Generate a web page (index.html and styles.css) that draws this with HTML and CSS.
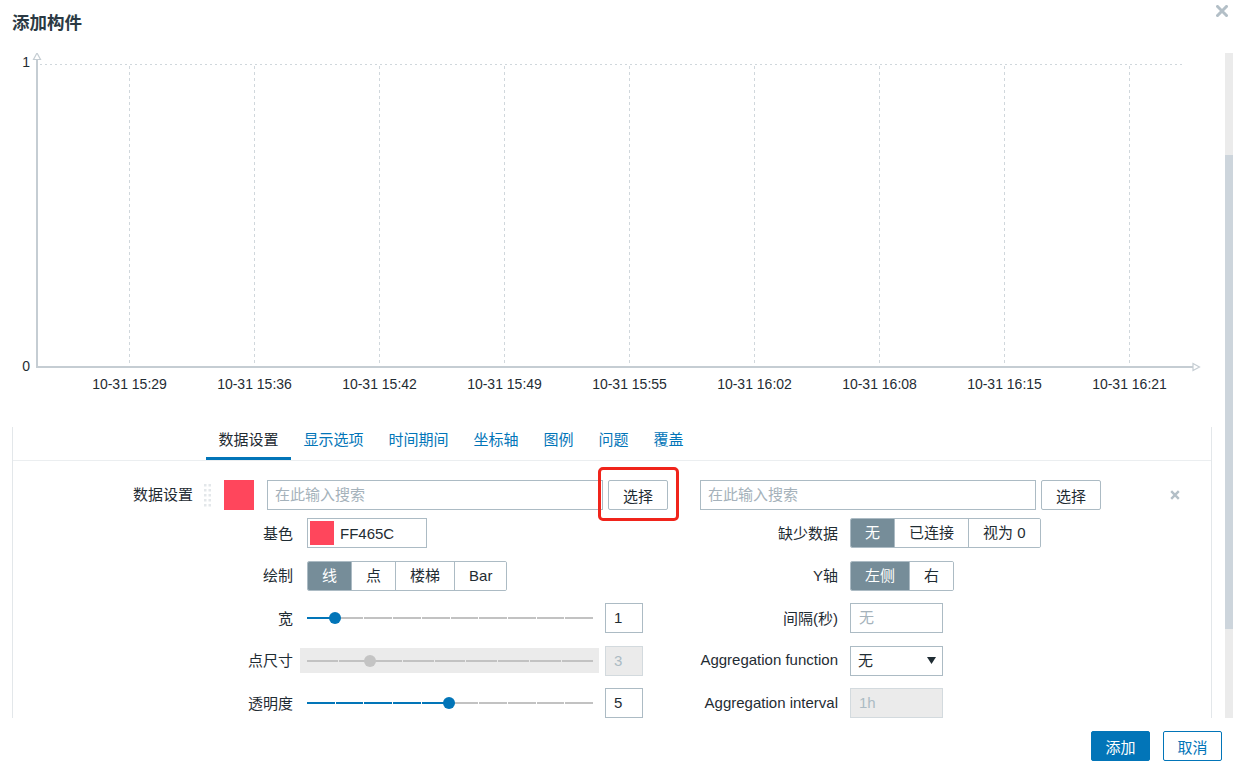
FILE: index.html
```html
<!DOCTYPE html>
<html lang="zh-CN">
<head>
<meta charset="utf-8">
<title>添加构件</title>
<link rel="stylesheet" href="styles.css">
</head>
<body>
<div class="dialog">
  <header class="dlg-head">
    <h1 class="dlg-title">添加构件</h1>
    <button class="dlg-close" type="button" aria-label="关闭">
      <svg width="12" height="12" viewBox="0 0 12 12"><path d="M1.5 1.5L10.5 10.5M10.5 1.5L1.5 10.5" stroke="#b3bfc7" stroke-width="3" stroke-linecap="square"/></svg>
    </button>
  </header>

  <div class="dlg-body">
    <div class="dlg-scroll">
      <svg class="chart" width="1225" height="374" viewBox="0 53 1225 374">
        <g class="grid">
          <line x1="40" y1="64.5" x2="1185" y2="64.5" stroke-dasharray="2 3"/>
          <line x1="129.5" y1="66" x2="129.5" y2="366"/>
          <line x1="254.5" y1="66" x2="254.5" y2="366"/>
          <line x1="379.5" y1="66" x2="379.5" y2="366"/>
          <line x1="504.5" y1="66" x2="504.5" y2="366"/>
          <line x1="629.5" y1="66" x2="629.5" y2="366"/>
          <line x1="754.5" y1="66" x2="754.5" y2="366"/>
          <line x1="879.5" y1="66" x2="879.5" y2="366"/>
          <line x1="1004.5" y1="66" x2="1004.5" y2="366"/>
          <line x1="1129.5" y1="66" x2="1129.5" y2="366"/>
        </g>
        <g class="axis">
          <line x1="37" y1="59" x2="37" y2="368" stroke-width="2"/>
          <polygon points="37,53 33.5,59.5 40.5,59.5" fill="#fff" stroke-width="1.2"/>
          <line x1="36" y1="367" x2="1193" y2="367" stroke-width="2"/>
          <polygon points="1199.5,367 1193,363.5 1193,370.5" fill="#fff" stroke-width="1.2"/>
        </g>
        <g class="ylabels">
          <text x="30" y="67">1</text>
          <text x="30" y="371">0</text>
        </g>
        <g class="xlabels">
          <text x="129.5" y="389">10-31 15:29</text>
          <text x="254.5" y="389">10-31 15:36</text>
          <text x="379.5" y="389">10-31 15:42</text>
          <text x="504.5" y="389">10-31 15:49</text>
          <text x="629.5" y="389">10-31 15:55</text>
          <text x="754.5" y="389">10-31 16:02</text>
          <text x="879.5" y="389">10-31 16:08</text>
          <text x="1004.5" y="389">10-31 16:15</text>
          <text x="1129.5" y="389">10-31 16:21</text>
        </g>
      </svg>

      <div class="tabs-panel">
        <nav class="tabs">
          <a class="tab active">数据设置</a>
          <a class="tab">显示选项</a>
          <a class="tab">时间期间</a>
          <a class="tab">坐标轴</a>
          <a class="tab">图例</a>
          <a class="tab">问题</a>
          <a class="tab">覆盖</a>
        </nav>

        <div class="form">
          <div class="form-label">数据设置</div>
          <div class="ds">
            <div class="ds-head">
              <svg class="drag" width="7" height="23" viewBox="0 0 7 23">
                <rect x="0" y="0" width="2.5" height="2.5"/><rect x="4.5" y="0" width="2.5" height="2.5"/>
                <rect x="0" y="5" width="2.5" height="2.5"/><rect x="4.5" y="5" width="2.5" height="2.5"/>
                <rect x="0" y="10" width="2.5" height="2.5"/><rect x="4.5" y="10" width="2.5" height="2.5"/>
                <rect x="0" y="15" width="2.5" height="2.5"/><rect x="4.5" y="15" width="2.5" height="2.5"/>
                <rect x="0" y="20" width="2.5" height="2.5"/><rect x="4.5" y="20" width="2.5" height="2.5"/>
              </svg>
              <div class="swatch"></div>
              <div class="input search"><span class="ph">在此输入搜索</span></div>
              <div class="annot"><button class="btn" type="button">选择</button></div>
              <div class="input search second"><span class="ph">在此输入搜索</span></div>
              <button class="btn" type="button">选择</button>
              <button class="ds-remove" type="button" aria-label="删除">
                <svg width="10" height="10" viewBox="0 0 10 10"><path d="M1.2 1.2L8.8 8.8M8.8 1.2L1.2 8.8" stroke="#b3bfc7" stroke-width="2.4"/></svg>
              </button>
            </div>

            <div class="ds-grid">
              <div class="fl">基色</div>
              <div class="ff ff-l">
                <div class="color-input"><span class="color-chip"></span><span>FF465C</span></div>
              </div>
              <div class="fl fl-r">缺少数据</div>
              <div class="ff">
                <div class="seg"><span class="on">无</span><span>已连接</span><span>视为 0</span></div>
              </div>

              <div class="fl">绘制</div>
              <div class="ff ff-l">
                <div class="seg"><span class="on">线</span><span>点</span><span>楼梯</span><span>Bar</span></div>
              </div>
              <div class="fl fl-r">Y轴</div>
              <div class="ff">
                <div class="seg"><span class="on">左侧</span><span>右</span></div>
              </div>

              <div class="fl">宽</div>
              <div class="ff">
                <div class="slider">
                  <div class="track">
                    <i class="on"></i><i></i><i></i><i></i><i></i><i></i><i></i><i></i><i></i><i></i>
                    <span class="thumb" style="left: 10%"></span>
                  </div>
                </div>
                <div class="input num">1</div>
              </div>
              <div class="fl fl-r">间隔(秒)</div>
              <div class="ff">
                <div class="input short"><span class="ph">无</span></div>
              </div>

              <div class="fl">点尺寸</div>
              <div class="ff">
                <div class="slider disabled">
                  <div class="track">
                    <i></i><i></i><i></i><i></i><i></i><i></i><i></i><i></i><i></i>
                    <span class="thumb" style="left: 22.222%"></span>
                  </div>
                </div>
                <div class="input num disabled">3</div>
              </div>
              <div class="fl fl-r">Aggregation function</div>
              <div class="ff">
                <div class="input short select"><span>无</span>
                  <svg width="9" height="7" viewBox="0 0 9 7"><path d="M0 0H9L4.5 7Z" fill="#1f2c33"/></svg>
                </div>
              </div>

              <div class="fl">透明度</div>
              <div class="ff">
                <div class="slider">
                  <div class="track">
                    <i class="on"></i><i class="on"></i><i class="on"></i><i class="on"></i><i class="on"></i><i></i><i></i><i></i><i></i><i></i>
                    <span class="thumb" style="left: 50%"></span>
                  </div>
                </div>
                <div class="input num">5</div>
              </div>
              <div class="fl fl-r">Aggregation interval</div>
              <div class="ff">
                <div class="input short disabled">1h</div>
              </div>

              <div class="fl">&nbsp;</div>
              <div class="ff"></div>
              <div class="fl fl-r">&nbsp;</div>
              <div class="ff"></div>
            </div>
          </div>
        </div>
      </div>
    </div>
    <div class="scrollbar"><div class="scroll-thumb"></div></div>
  </div>

  <footer class="dlg-foot">
    <button class="btn-primary" type="button">添加</button>
    <button class="btn-outline" type="button">取消</button>
  </footer>
</div>
</body>
</html>
```

FILE: styles.css
```css
* { box-sizing: border-box; }

html, body {
  margin: 0;
  padding: 0;
}

body {
  width: 1233px;
  height: 770px;
  overflow: hidden;
  background: #fff;
  color: #1f2c33;
  font-family: "Liberation Sans", "Noto Sans CJK SC", Arial, sans-serif;
  font-size: 15px;
}

button {
  font: inherit;
  cursor: pointer;
}

.dialog {
  display: flex;
  flex-direction: column;
  height: 770px;
}

/* header */
.dlg-head {
  flex: none;
  height: 53px;
  display: flex;
  justify-content: space-between;
  align-items: flex-start;
  padding: 0 5px 0 12px;
}

.dlg-title {
  margin: 12px 0 0;
  font-size: 17.5px;
  line-height: 22px;
  font-weight: bold;
  color: #2b3a44;
}

.dlg-close {
  display: block;
  margin-top: 5px;
  width: 12px;
  height: 12px;
  padding: 0;
  border: 0;
  background: none;
}

.dlg-close svg { display: block; }

/* body */
.dlg-body {
  flex: none;
  height: 665px;
  display: flex;
}

.dlg-scroll {
  flex: 1;
  overflow: hidden;
}

.scrollbar {
  flex: none;
  width: 8px;
  background: #ebebeb;
  padding-top: 102px;
}

.scroll-thumb {
  height: 474px;
  background: #cdd5dc;
}

/* chart */
.chart { display: block; }

.chart .grid line {
  stroke: #d0d7dc;
  stroke-width: 1;
  stroke-dasharray: 3 3;
}

.chart .grid line:first-child { stroke-dasharray: 2 3; }

.chart .axis line,
.chart .axis polygon {
  stroke: #c5cdd3;
}

.chart text {
  font-family: "Liberation Sans", Arial, sans-serif;
  font-size: 14px;
  fill: #1f2c33;
}

.chart .ylabels text { text-anchor: end; }
.chart .xlabels text { text-anchor: middle; }

/* tabs panel */
.tabs-panel {
  margin: 0 13px 0 12px;
  border-left: 1px solid #e3e7ea;
  border-right: 1px solid #e3e7ea;
  padding-bottom: 60px;
}

.tabs {
  display: flex;
  padding-left: 193px;
  border-bottom: 1px solid #ebeef0;
}

.tab {
  padding: 4px 12.5px 8px;
  line-height: 18px;
  color: #0275b8;
  border-bottom: 3px solid transparent;
  text-decoration: none;
}

.tab.active {
  color: #1f2c33;
  border-bottom-color: #0275b8;
}

/* form */
.form {
  display: grid;
  grid-template-columns: 180px 1fr;
  column-gap: 11px;
  padding-top: 19px;
}

.form-label {
  text-align: right;
  line-height: 30px;
}

.ds-head {
  display: flex;
  align-items: center;
  height: 30px;
}

.drag {
  display: block;
  fill: #e3e7ea;
}

.swatch {
  width: 30px;
  height: 30px;
  margin-left: 13px;
  background: #ff465c;
}

.input {
  height: 30px;
  border: 1px solid #acbbc4;
  background: #fff;
  padding: 0 7px;
  line-height: 28px;
  white-space: nowrap;
  overflow: hidden;
}

.ph { color: #a5b2bb; }

.search {
  width: 336px;
  margin-left: 13px;
}

.search.second { margin-left: 32px; }

.btn {
  height: 30px;
  width: 60px;
  margin-left: 5px;
  padding: 0;
  border: 1px solid #acbbc4;
  border-radius: 2px;
  background: #fff;
  color: #1f2c33;
}

.annot {
  position: relative;
  display: flex;
}

.annot::after {
  content: "";
  position: absolute;
  top: -13px;
  bottom: -11px;
  left: -5px;
  right: -11px;
  border: 3px solid #f0241b;
  border-radius: 5px;
  pointer-events: none;
}

.ds-remove {
  display: block;
  margin-left: 69px;
  width: 10px;
  height: 10px;
  padding: 0;
  border: 0;
  background: none;
}

.ds-remove svg { display: block; }

/* data set sub form */
.ds-grid {
  margin: 8px 0 0 20px;
  display: grid;
  grid-template-columns: 76px 400px 150px 1fr;
  grid-auto-rows: 30px;
  row-gap: 12.5px;
  align-items: center;
}

.fl {
  text-align: right;
  padding-right: 7px;
  padding-bottom: 2px;
  white-space: nowrap;
}

.fl-r { padding-right: 12px; }

.ff {
  display: flex;
  align-items: center;
  height: 30px;
}

.ff-l { padding-left: 7px; }

.color-input {
  display: flex;
  align-items: center;
  width: 120px;
  height: 30px;
  border: 1px solid #acbbc4;
  padding: 2px;
}

.color-chip {
  width: 24px;
  height: 24px;
  background: #ff465c;
  margin-right: 6px;
}

.seg {
  display: flex;
  height: 30px;
  border: 1px solid #acbbc4;
  border-radius: 2px;
  overflow: hidden;
}

.seg span {
  padding: 0 14px;
  line-height: 28px;
  border-left: 1px solid #acbbc4;
  background: #fff;
  white-space: nowrap;
}

.seg span:first-child { border-left: 0; }

.seg span.on {
  background: #768d99;
  color: #fff;
}

/* slider */
.slider {
  width: 299px;
  height: 25px;
  padding: 0 6px 0 7px;
  display: flex;
  align-items: center;
}

.slider.disabled { background: #ebebeb; }

.track {
  position: relative;
  flex: 1;
  display: flex;
  gap: 1px;
  height: 2px;
}

.track i {
  flex: 1;
  background: #c2c2c2;
}

.track i.on { background: #0275b8; }

.thumb {
  position: absolute;
  top: 50%;
  width: 12px;
  height: 12px;
  margin: -6px 0 0 -7px;
  border-radius: 50%;
  background: #0275b8;
}

.slider.disabled .thumb { background: #c4c4c4; }

.num {
  width: 38px;
  margin-left: 6px;
  padding-left: 8px;
}

.input.disabled {
  background: #ebebeb;
  border-color: #d3dade;
  color: #acbbc4;
}

.short {
  width: 93px;
  padding-left: 8px;
}

.select {
  display: flex;
  align-items: center;
  justify-content: space-between;
  padding: 0 6px 0 7px;
}

.select svg { display: block; }

/* footer */
.dlg-foot {
  flex: none;
  height: 52px;
  display: flex;
  justify-content: flex-end;
  align-items: flex-start;
  gap: 13px;
  padding: 13px 11px 0 0;
}

.btn-primary,
.btn-outline {
  width: 59px;
  height: 30px;
  padding: 0;
  border-radius: 2px;
  border: 1px solid #0275b8;
}

.btn-primary {
  background: #0275b8;
  color: #fff;
}

.btn-outline {
  background: #fff;
  color: #0275b8;
}
```
